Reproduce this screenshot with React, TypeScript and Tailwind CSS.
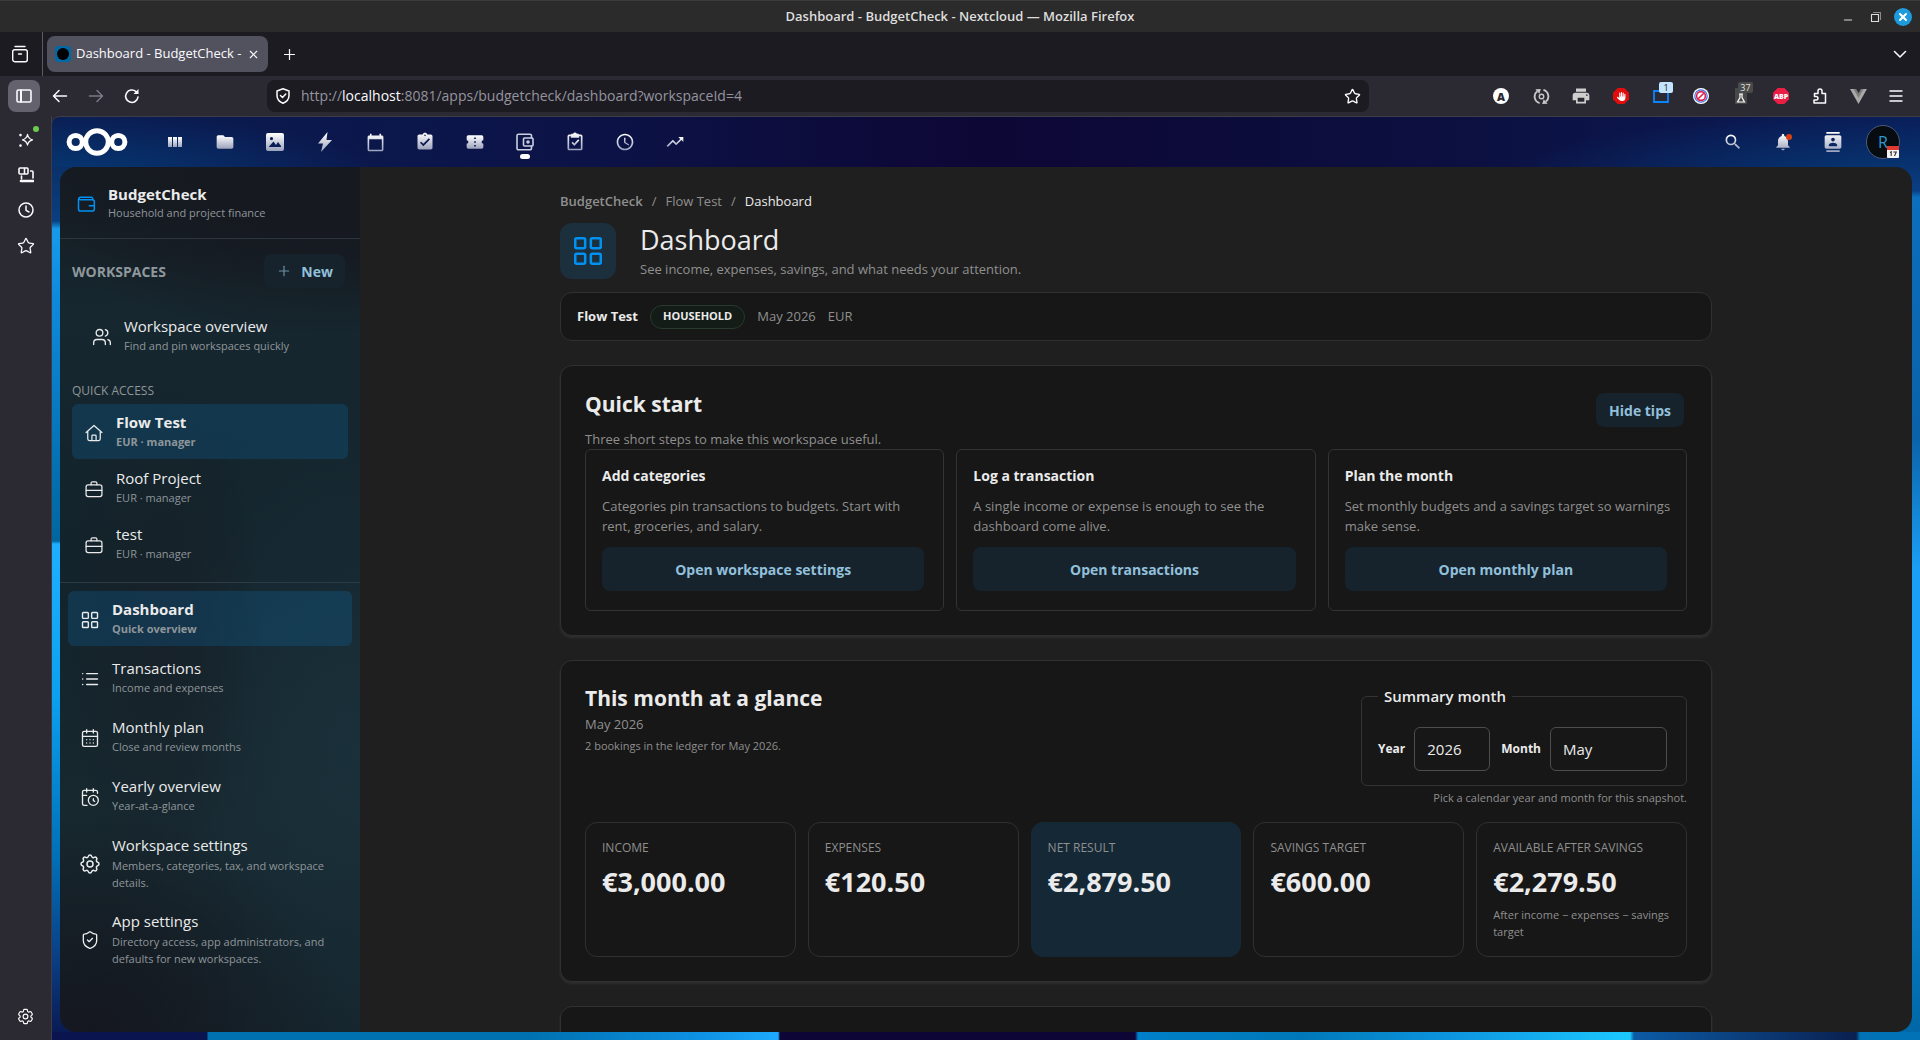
import React from "react";
import {
  MdFolder,
  MdCalendarToday,
  MdAssignmentTurnedIn,
  MdConfirmationNumber,
  MdAccessTime,
  MdTrendingUp,
  MdSearch,
  MdNotifications,
  MdContacts,
  MdPrint,
} from "react-icons/md";
import { TbSettings } from "react-icons/tb";
import { HiOutlineCog6Tooth } from "react-icons/hi2";
import { FaHand } from "react-icons/fa6";
import {
  LayoutGrid,
  CalendarDays,
  CalendarClock,
  ShieldCheck,
  Users,
  Star,
  Plus,
  X,
} from "lucide-react";

type Kids = { children: React.ReactNode };

function Line({ children, size = 20, sw = 1.5, box = 24, className = "" }: Kids & { size?: number; sw?: number; box?: number; className?: string }) {
  return (
    <svg width={size} height={size} viewBox={`0 0 ${box} ${box}`} fill="none" stroke="currentColor" strokeWidth={sw} strokeLinecap="round" strokeLinejoin="round" className={className} aria-hidden="true">
      {children}
    </svg>
  );
}

/* ---------- Window chrome ---------- */

function TitleBar() {
  return (
    <div className="relative flex h-8 shrink-0 items-center justify-end border-t border-[#3c3c3c] bg-[#2b2b2b] pr-2">
      <span className="absolute inset-x-0 text-center text-[13px] font-semibold text-[#dedede]">Dashboard - BudgetCheck - Nextcloud — Mozilla Firefox</span>
      <div className="relative flex items-center text-[#dedede]">
        <button aria-label="Minimize" className="flex h-6 w-7 items-center justify-center">
          <Line size={12} box={12} sw={1.2}><path d="M2.500 9h7" /></Line>
        </button>
        <button aria-label="Restore" className="flex h-6 w-7 items-center justify-center">
          <Line size={12} box={12} sw={1.1}><path d="M1.500 3.500h7v7h-7z" /><path d="M3.500 1.500h7v7" stroke="#8a8a8a" /></Line>
        </button>
        <button aria-label="Close" className="ml-1 flex size-[18px] items-center justify-center rounded-full bg-[#1d9bdc] text-white">
          <X size={12} strokeWidth={4} />
        </button>
      </div>
    </div>
  );
}

function TabBar() {
  return (
    <div className="flex h-11 shrink-0 items-center bg-[#1c1b22] text-[#fbfbfe]">
      <div className="flex h-full w-[43px] items-center justify-center border-r border-[#5b5b66] pr-[2px]">
        <button aria-label="Recent browsing">
          <Line size={18} box={18} sw={1.4}><path d="M4 1.500h10" /><rect x="1.700" y="4.700" width="14.600" height="12" rx="2" /><path d="M7.500 9h3" /></Line>
        </button>
      </div>
      <div className="ml-1 flex h-9 w-[221px] items-center rounded-lg bg-[#52525e] pl-2 pr-2">
        <span className="flex size-4 shrink-0 items-center justify-center rounded-[3px] bg-[#0068a3]"><span className="size-3 rounded-full bg-black" /></span>
        <span className="ml-[5px] flex-1 whitespace-nowrap text-[13px]">Dashboard - BudgetCheck -</span>
        <button aria-label="Close tab"><X size={13} strokeWidth={2} /></button>
      </div>
      <button aria-label="New tab" className="ml-[13px]"><Plus size={17} strokeWidth={1.7} /></button>
      <button aria-label="List all tabs" className="ml-auto mr-3">
        <Line size={16} box={16}><path d="M2.500 5.500 8 11l5.500-5.500" /></Line>
      </button>
    </div>
  );
}

function Octagon({ color, children }: Kids & { color: string }) {
  return (
    <span className="relative flex size-4 items-center justify-center text-white">
      <svg viewBox="0 0 16 16" width="16" height="16" className="absolute inset-0" aria-hidden="true"><path d="M4.700 0h6.600L16 4.700v6.600L11.300 16H4.700L0 11.300V4.700z" fill={color} /></svg>
      <span className="relative flex items-center justify-center">{children}</span>
    </span>
  );
}

const EXT: { name: string; icon: React.ReactNode; narrow?: boolean }[] = [
  { name: "Account", icon: <span className="flex size-4 items-center justify-center rounded-full bg-white text-[11px] font-extrabold leading-none text-[#2b2a33]">A</span> },
  {
    name: "Sync",
    icon: (
      <Line size={17} box={18} sw={2} className="text-[#c6c6c6]">
        <path d="M7 16A7.200 7.200 0 0 1 4.500 3.400M11 2A7.200 7.200 0 0 1 13.500 14.600" strokeLinecap="butt" />
        <path d="M2.500 1.300 8.300 1 6.700 6zM15.500 16.700l-5.800.3 1.600-5z" fill="currentColor" stroke="none" />
        <circle cx="9" cy="9" r="2.400" strokeWidth="1.400" />
      </Line>
    ),
  },
  { name: "Print", icon: <MdPrint size={20} className="text-[#cfcfcf]" /> },
  { name: "Blocker", icon: <Octagon color="#e00d0d"><FaHand size={9} /></Octagon> },
  {
    name: "Containers",
    icon: (
      <span className="relative">
        <svg width="16" height="14" viewBox="0 0 16 14" aria-hidden="true"><path d="M1 2h14v11H1z" fill="none" stroke="#0a84ff" strokeWidth="1.800" /></svg>
        <span className="absolute -top-[7px] left-[6px] h-[11px] w-[14px] rounded-[2px] bg-[#c3e5ff] text-center text-[9px] leading-[11px] text-[#15141a]">1</span>
      </span>
    ),
  },
  {
    name: "Privacy",
    icon: (
      <svg width="16" height="16" viewBox="0 0 16 16" fill="none" aria-hidden="true"><circle cx="8" cy="8" r="8" fill="#fff" /><circle cx="8" cy="8" r="6.200" stroke="#3f6fe0" strokeWidth="1.200" /><circle cx="8" cy="8" r="4.400" stroke="#d5214f" strokeWidth="1.600" /><path d="m5.200 10.800 5.600-5.600" stroke="#d5214f" strokeWidth="1.600" /></svg>
    ),
  },
  {
    name: "Lab",
    icon: (
      <span className="relative">
        <svg width="12" height="16" viewBox="0 0 12 16" aria-hidden="true"><rect width="12" height="16" rx="1" fill="#484848" /><path d="M4 6h4M5 6.500v3L2.500 14h7L7 9.500v-3" fill="none" stroke="#fff" strokeWidth="1.200" /></svg>
        <span className="absolute -top-[6px] left-[3px] h-[11px] w-[15px] rounded-[2px] bg-[#4a4a4a] text-center text-[9px] leading-[11px] text-[#e0e0e0]">37</span>
      </span>
    ),
  },
  { name: "Adblock Plus", icon: <Octagon color="#ed1e45"><span className="text-[7px] font-extrabold leading-none">ABP</span></Octagon> },
  { name: "Extensions", narrow: true, icon: <Line size={16} box={16} sw={1.5}><path d="M2 15h11.500V5.500H10V3a2 2 0 0 0-4 0v2.500H2.500v3h1.700a1.700 1.700 0 0 1 0 3.500H2z" /></Line> },
  { name: "Vue devtools", narrow: true, icon: <svg width="17" height="15" viewBox="0 0 18 16" aria-hidden="true"><path d="M0 0h18L9 16z" fill="#a9a9a9" /><path d="M3.600 0h10.800L9 9.500z" fill="#7d7d7d" /><path d="M6.500 0h5L9 4.500z" fill="#2b2a33" /></svg> },
  { name: "Menu", narrow: true, icon: <Line size={16} box={16} sw={1.4}><path d="M2 3h12M2 8h12M2 13h12" /></Line> },
];

function Toolbar() {
  return (
    <div className="flex h-10 shrink-0 items-center bg-[#2b2a33] pl-2 pr-[5px] text-[#fbfbfe]">
      <button aria-label="Sidebars" className="flex size-8 items-center justify-center rounded-lg bg-[#63626d]">
        <Line size={16} box={16} sw={1.6}><rect x="1" y="2" width="14" height="12" rx="1.500" /><path d="M5 2.500v11" strokeWidth="2" /></Line>
      </button>
      <button aria-label="Back" className="ml-3"><Line size={16} box={16}><path d="M14.500 8h-13M7 2.500 1.500 8 7 13.500" /></Line></button>
      <button aria-label="Forward" className="ml-5 text-[#7a7984]"><Line size={16} box={16}><path d="M1.500 8h13M9 2.500 14.500 8 9 13.500" /></Line></button>
      <button aria-label="Reload" className="ml-5"><Line size={16} box={16} sw={1.6}><path d="M14 9a6.200 6.200 0 1 1-2-5.400L13.500 5" /><path d="M14.500 1v5h-5z" fill="currentColor" stroke="none" /></Line></button>
      <div className="ml-[127px] flex h-8 max-w-[1102px] flex-1 items-center rounded-lg bg-[#1c1b22] pl-2 pr-2">
        <Line size={16} box={16}><path d="M8 .8 14 3v4.500c0 3.500-2.500 6.300-6 7.700-3.500-1.400-6-4.200-6-7.700V3z" /><path d="m5.500 7.500 2 2 3.300-3.500" /></Line>
        <div role="textbox" aria-label="Address" className="ml-[10px] flex-1 text-sm text-[#95949e]">
          http://<span className="text-[#fbfbfe]">localhost</span>:8081/apps/budgetcheck/dashboard?workspaceId=4
        </div>
        <button aria-label="Bookmark"><Star size={17} strokeWidth={1.9} /></button>
      </div>
      <div className="ml-auto flex items-center">
        {EXT.map((e) => (
          <button key={e.name} aria-label={e.name} className={`flex h-8 items-center justify-center ${e.narrow ? "w-[38px]" : "w-10"}`}>{e.icon}</button>
        ))}
      </div>
    </div>
  );
}

function BrowserSidebar() {
  return (
    <aside className="flex w-[52px] shrink-0 flex-col items-center border-r border-[#3e3d47] bg-[#2b2a33] pb-[14px] pt-4 text-[#fbfbfe]">
      <button aria-label="AI chatbot" className="relative">
        <Line size={16} box={16} sw={1.3}><path d="M9.500 2.500c.6 3.200 1.800 4.500 5 5.300-3.200.8-4.400 2-5 5.200-.6-3.200-1.800-4.400-5-5.200 3.200-.8 4.400-2.100 5-5.300z" /><path d="M2.500 3v.1M2.500 13.500v.1" strokeWidth="2.600" /></Line>
        <span className="absolute -right-[5px] -top-[6px] size-[6px] rounded-full bg-[#6ccb4e]" />
      </button>
      <button aria-label="Synced tabs" className="mt-[19px]">
        <Line size={16} box={16} sw={1.6}><rect x="1" y="1" width="9" height="6" rx="1" /><path d="M6.500 1.500v5M3.500 9v3M12.500 4H14a1 1 0 0 1 1 1v6" /><path d="M3 14h12" strokeWidth="2.600" /></Line>
      </button>
      <button aria-label="History" className="mt-[19px]"><Line size={16} box={16}><circle cx="8" cy="8" r="7" /><path d="M8 4v4.300l3 1.700" /></Line></button>
      <button aria-label="Bookmarks" className="mt-[19px]"><Star size={18} strokeWidth={1.7} /></button>
      <button aria-label="Customize sidebar" className="mt-auto"><HiOutlineCog6Tooth size={19} strokeWidth={1.5} /></button>
    </aside>
  );
}

/* ---------- Nextcloud header ---------- */

const G = "fill-[url(#iconFade)]";

const APPS: { name: string; icon: React.ReactNode; active?: boolean }[] = [
  { name: "Dashboard", icon: <svg width="14" height="10" viewBox="0 0 14 10" className={G}><path d="M0 0h4v10H0zM5 0h4v10H5zM10 0h4v10h-4z" /></svg> },
  { name: "Files", icon: <MdFolder size={20} className={G} /> },
  { name: "Photos", icon: <svg width="18" height="18" viewBox="0 0 18 18" className={G}><path fillRule="evenodd" d="M2 0h14a2 2 0 0 1 2 2v14a2 2 0 0 1-2 2H2a2 2 0 0 1-2-2V2a2 2 0 0 1 2-2zM5.500 4a1.600 1.600 0 1 0 0 3.200 1.600 1.600 0 0 0 0-3.200zM3 14h12v-1l-3-4-2 3-2.500-3.500L3 13.500z" /></svg> },
  { name: "Activity", icon: <svg width="16" height="20" viewBox="0 0 16 20" className={G}><path d="M10.500 0 1 11.500h5L4 20 15 8H9.500z" /></svg> },
  { name: "Calendar", icon: <MdCalendarToday size={19} className={G} /> },
  { name: "Tasks", icon: <MdAssignmentTurnedIn size={20} className={G} /> },
  { name: "Tickets", icon: <MdConfirmationNumber size={20} className={G} /> },
  {
    name: "BudgetCheck",
    active: true,
    icon: (
      <Line size={18} box={18} sw={1.6} className="text-[#c9cfe0]">
        <path d="M15.500 5V2.700A1.500 1.500 0 0 0 14 1.200H2.500A1.500 1.500 0 0 0 1 2.700v12.600a1.500 1.500 0 0 0 1.500 1.500H14a1.500 1.500 0 0 0 1.500-1.500V13" />
        <rect x="7.500" y="5" width="9.500" height="8" rx="1" /><circle cx="12" cy="9" r="1" />
      </Line>
    ),
  },
  {
    name: "Checks",
    icon: (
      <svg width="20" height="20" viewBox="0 0 24 24" aria-hidden="true"><path className={G} d="M19 3h-2.500V2h-2.300a2.400 2.400 0 0 0-4.400 0H7.500v1H5a2 2 0 0 0-2 2v15a2 2 0 0 0 2 2h14a2 2 0 0 0 2-2V5a2 2 0 0 0-2-2zm0 17H5V5h2v2h10V5h2z" /><path className={G} d="m7.800 13.200 1.400-1.400 2 2 4.600-5 1.400 1.400-6 6.500z" /></svg>
    ),
  },
  { name: "Time", icon: <MdAccessTime size={20} className={G} /> },
  { name: "Analytics", icon: <MdTrendingUp size={20} className={G} /> },
];

function CloudHeader() {
  return (
    <header className="flex h-[50px] shrink-0 items-center pl-[14px] pr-5">
      <svg width="0" height="0" className="absolute" aria-hidden="true">
        <linearGradient id="iconFade" x1="0" y1="0" x2="0" y2="1"><stop offset="0" stopColor="#fff" /><stop offset="1" stopColor="#9ba3bd" /></linearGradient>
      </svg>
      <a href="#home" aria-label="Nextcloud">
        <svg width="62" height="28" viewBox="0 0 62 28" fill="none" stroke="#fff" strokeWidth="5" aria-hidden="true">
          <circle cx="31" cy="14" r="11.300" /><circle cx="9.700" cy="14" r="6.600" /><circle cx="52.300" cy="14" r="6.600" />
        </svg>
      </a>
      <nav className="ml-[22px] flex h-full">
        {APPS.map((a) => (
          <a key={a.name} href="#app" aria-label={a.name} className="relative flex w-[50px] items-center justify-center">
            {a.icon}
            {a.active && <span className="absolute bottom-[8px] h-[5px] w-[10px] rounded-full bg-white" />}
          </a>
        ))}
      </nav>
      <div className="ml-auto flex items-center">
        <button aria-label="Search" className="flex w-[50px] justify-center"><MdSearch size={20} className={G} /></button>
        <button aria-label="Notifications" className="relative flex w-[50px] justify-center">
          <MdNotifications size={20} className={G} />
          <span className="absolute right-[16px] top-[2px] size-[6px] rounded-full bg-[#d9400f]" />
        </button>
        <button aria-label="Contacts" className="flex w-[50px] justify-center"><MdContacts size={20} className={G} /></button>
        <button aria-label="Account menu" className="relative ml-2 flex size-[34px] items-center justify-center rounded-full border border-[#4a5a7a] bg-[#060c10] text-base text-[#2f9ad0]">
          R
          <svg width="12" height="12" viewBox="0 0 12 12" className="absolute bottom-0 right-0" aria-hidden="true"><rect width="12" height="12" rx="1" fill="#f4f4f4" /><path d="M0 0h12v4H0z" fill="#e0392e" /><path d="M3 6.500 4.200 5.800V10M6.300 6h3L7.500 10" stroke="#333" strokeWidth="1.100" fill="none" /></svg>
        </button>
      </div>
    </header>
  );
}

/* ---------- App navigation ---------- */

const Briefcase = () => (
  <Line size={20}><rect x="2.500" y="7" width="19" height="14" rx="2.500" /><path d="M8.500 7V5a1.700 1.700 0 0 1 1.700-1.700h3.600A1.700 1.700 0 0 1 15.500 5v2M2.500 13.500h19" /></Line>
);
const House = () => (
  <Line size={20}><path d="M2.500 11.500 12 3l9.500 8.500M4.500 9.800V19a2 2 0 0 0 2 2h11a2 2 0 0 0 2-2V9.800M9.500 21v-5.500a1 1 0 0 1 1-1h3a1 1 0 0 1 1 1V21" /></Line>
);
const ListIcon = () => (
  <Line size={20} sw={1.7}><path d="M8 5.500h13M8 12h13M8 18.500h13M3.200 5.500h.1M3.200 12h.1M3.200 18.500h.1" /></Line>
);

function NavItem({ icon, title, sub, active, tight, className = "" }: { icon: React.ReactNode; title: string; sub: string; active?: boolean; tight?: boolean; className?: string }) {
  return (
    <a href="#nav" className={`flex items-center rounded-md px-3 py-2 text-[#ebebeb] ${active ? "bg-[#0e75b83b] font-bold" : ""} ${className}`}>
      <span className="mt-[2px] shrink-0">{icon}</span>
      <span className="ml-3 min-w-0 flex-1">
        <span className="block text-[15px] leading-5">{title}</span>
        <span className={`block text-[11px] text-[#8f969a] ${tight ? "pt-[2px] leading-[17px]" : "pt-px leading-[18px]"}`}>{sub}</span>
      </span>
    </a>
  );
}

function AppNav() {
  return (
    <nav className="flex w-[300px] shrink-0 flex-col bg-[radial-gradient(260px_220px_at_10%_100%,#15171f,transparent),radial-gradient(340px_170px_at_90%_0%,#161920_40%,transparent),radial-gradient(100px_260px_at_35%_54%,#172129,transparent),radial-gradient(260px_360px_at_100%_68%,#1a303a,transparent),linear-gradient(180deg,#161b22_0%,#16272f_16%,#13232b_45%,#17282f_75%,#14232b_100%)]">
      <div className="flex items-center border-b border-[#2d363c] pb-[17px] pl-4 pt-[17px]">
        <Line size={20} sw={1.8} className="mt-[3px] text-[#0091f2]"><path d="M20 7V5.500A1.500 1.500 0 0 0 18.500 4H5a2.500 2.500 0 0 0-2 2.500V18a2.500 2.500 0 0 0 2.500 2.500h14A2.500 2.500 0 0 0 22 18V9.500A2.500 2.500 0 0 0 19.500 7H5.500A2 2 0 0 1 3.500 5.500M22 14h-6" /></Line>
        <div className="ml-3">
          <div className="text-[15px] font-bold leading-5 text-[#ebebeb]">BudgetCheck</div>
          <div className="pt-px text-[11px] leading-4 text-[#8f969a]">Household and project finance</div>
        </div>
      </div>
      <div className="mt-[15px] flex h-[34px] items-center pl-3 pr-[15px]">
        <h2 className="text-[14px] font-bold text-[#8f989c]">WORKSPACES</h2>
        <button className="ml-auto flex h-[34px] items-center rounded-lg bg-[#16232c] pl-3 pr-3 text-[14px] font-bold text-[#92c0dc]">
          <Plus size={16} strokeWidth={1.7} className="mr-[9px] opacity-70" />New
        </button>
      </div>
      <NavItem className="ml-5 mr-3 mt-5" icon={<Users size={20} strokeWidth={1.6} />} title="Workspace overview" sub="Find and pin workspaces quickly" />
      <h3 className="mb-[5px] ml-3 mt-5 text-[12px] leading-4 text-[#8f969a]">QUICK ACCESS</h3>
      <div className="mx-3 flex flex-col gap-px">
        <NavItem active icon={<House />} title="Flow Test" sub="EUR · manager" />
        <NavItem icon={<Briefcase />} title="Roof Project" sub="EUR · manager" />
        <NavItem icon={<Briefcase />} title="test" sub="EUR · manager" />
      </div>
      <div className="mt-[11px] flex flex-col gap-1 border-t border-[#2d3c44] px-2 pt-2">
        <NavItem active icon={<LayoutGrid size={20} strokeWidth={1.7} />} title="Dashboard" sub="Quick overview" />
        <NavItem icon={<ListIcon />} title="Transactions" sub="Income and expenses" />
        <NavItem icon={<CalendarDays size={20} strokeWidth={1.6} />} title="Monthly plan" sub="Close and review months" />
        <NavItem icon={<CalendarClock size={20} strokeWidth={1.6} />} title="Yearly overview" sub="Year-at-a-glance" />
        <NavItem tight icon={<TbSettings size={24} strokeWidth={1.5} className="-mx-[2px]" />} title="Workspace settings" sub="Members, categories, tax, and workspace details." />
        <NavItem tight icon={<ShieldCheck size={20} strokeWidth={1.6} />} title="App settings" sub="Directory access, app administrators, and defaults for new workspaces." />
      </div>
    </nav>
  );
}

/* ---------- Dashboard ---------- */

const STEPS = [
  { title: "Add categories", text: "Categories pin transactions to budgets. Start with rent, groceries, and salary.", cta: "Open workspace settings" },
  { title: "Log a transaction", text: "A single income or expense is enough to see the dashboard come alive.", cta: "Open transactions" },
  { title: "Plan the month", text: "Set monthly budgets and a savings target so warnings make sense.", cta: "Open monthly plan" },
];

const METRICS = [
  { label: "INCOME", value: "€3,000.00" },
  { label: "EXPENSES", value: "€120.50" },
  { label: "NET RESULT", value: "€2,879.50", accent: true },
  { label: "SAVINGS TARGET", value: "€600.00" },
  { label: "AVAILABLE AFTER SAVINGS", value: "€2,279.50", note: "After income − expenses − savings target" },
];

const CARD = "mt-6 rounded-xl border border-[#303030] bg-[#171717] p-6 shadow-[0_2px_3px_#4d4d4d59]";
const BTN = "rounded-lg bg-[#16232c] text-[14px] font-bold text-[#92c0dc]";

function QuickStart() {
  return (
    <section className={CARD}>
      <div className="flex items-start justify-between">
        <div>
          <h2 className="text-[21px] font-bold leading-7">Quick start</h2>
          <p className="mt-[11px] text-[13px] leading-5 text-[#8f8f8f]">Three short steps to make this workspace useful.</p>
        </div>
        <button className={`${BTN} mr-[3px] mt-[3px] h-[34px] min-w-[88px] px-3`}>Hide tips</button>
      </div>
      <div className="grid grid-cols-3 gap-3">
        {STEPS.map((s) => (
          <article key={s.title} className="rounded-md border border-[#333] pb-[19px] pl-4 pr-3 pt-4">
            <h3 className="text-[14px] font-bold leading-5">{s.title}</h3>
            <p className="mt-[10px] text-[13px] leading-5 text-[#8f8f8f]">{s.text}</p>
            <div className="mt-[11px] flex pr-[7px]"><button className={`${BTN} h-11 flex-1`}>{s.cta}</button></div>
          </article>
        ))}
      </div>
    </section>
  );
}

function MonthGlance() {
  const field = "h-11 appearance-none rounded-md border border-[#4d4d4d] bg-[#171717] px-3 text-[15px] text-[#ebebeb]";
  return (
    <section className={CARD}>
      <div className="flex items-start justify-between">
        <div>
          <h2 className="text-[21px] font-bold leading-[26px]">This month at a glance</h2>
          <p className="mt-[3px] text-[13px] leading-5 text-[#8f8f8f]">May 2026</p>
          <p className="mt-[3px] text-[11px] leading-[18px] text-[#8f8f8f]">2 bookings in the ledger for May 2026.</p>
        </div>
        <div>
          <fieldset className="rounded-md border border-[#333] pb-[14px] pl-4 pr-[19px]">
            <legend className="px-[6px] text-[15px] font-semibold leading-[22px]">Summary month</legend>
            <div className="flex items-center pt-5">
              <label htmlFor="year" className="text-[12px] font-bold">Year</label>
              <input id="year" type="text" defaultValue="2026" className={`${field} ml-[9px] w-[76px]`} />
              <label htmlFor="month" className="ml-[11px] text-[12px] font-bold">Month</label>
              <select id="month" defaultValue="May" className={`${field} ml-[9px] w-[117px]`}><option>May</option></select>
            </div>
          </fieldset>
          <p className="mt-[4px] text-right text-[11px] leading-4 text-[#8f8f8f]">Pick a calendar year and month for this snapshot.</p>
        </div>
      </div>
      <div className="mt-4 grid grid-cols-5 gap-3">
        {METRICS.map((m) => (
          <div key={m.label} className={`rounded-xl border px-4 pb-4 pt-4 ${m.accent ? "border-[#152836] bg-[#152836]" : "border-[#303030]"}`}>
            <div className="whitespace-nowrap text-[12px] leading-[17px] text-[#8f8f8f]">{m.label}</div>
            <div className="mt-[10px] text-[27px] font-bold leading-8">{m.value}</div>
            {m.note && <div className="mt-2 text-[11px] leading-[17px] text-[#8f8f8f]">{m.note}</div>}
          </div>
        ))}
      </div>
    </section>
  );
}

function Main() {
  return (
    <main className="min-w-0 flex-1 overflow-hidden bg-[#1f1f1f] text-[#ebebeb]">
      <div className="mx-auto max-w-[1152px] pt-6">
        <nav aria-label="Breadcrumb" className="flex gap-[9px] text-[13px] leading-5 text-[#8f8f8f]">
          <a href="#app" className="font-semibold">BudgetCheck</a><span>/</span><a href="#ws">Flow Test</a><span>/</span><span className="font-medium text-[#ebebeb]">Dashboard</span>
        </nav>
        <div className="mt-3 flex gap-6">
          <span className="flex size-14 items-center justify-center rounded-xl bg-[#1c2f3d] text-[#0091f2]"><LayoutGrid size={34} strokeWidth={1.8} /></span>
          <div>
            <h1 className="text-[27px] leading-[34px]">Dashboard</h1>
            <p className="mt-[2px] text-[13px] leading-5 text-[#8f8f8f]">See income, expenses, savings, and what needs your attention.</p>
          </div>
        </div>
        <div className="mt-[13px] flex h-[49px] items-center rounded-xl border border-[#303030] bg-[#171717] px-4 text-[13px] text-[#8f8f8f]">
          <strong className="text-[#ebebeb]">Flow Test</strong>
          <span className="ml-3 flex h-6 items-center rounded-full border border-[#263a2e] bg-[#141c18] px-3 text-[11px] font-bold text-[#ebebeb]">HOUSEHOLD</span>
          <span className="ml-3">May 2026</span>
          <span className="ml-3">EUR</span>
        </div>
        <QuickStart />
        <MonthGlance />
        <section className={`${CARD} h-40`} />
      </div>
    </main>
  );
}

export default function App() {
  return (
    <div className="flex h-screen flex-col overflow-hidden bg-[#2b2a33] font-['Open_Sans','Noto_Sans',sans-serif]">
      <TitleBar />
      <TabBar />
      <Toolbar />
      <div className="flex min-h-0 flex-1">
        <BrowserSidebar />
        <div className="flex min-w-0 flex-1 flex-col rounded-tl-lg border-t border-[#3e3d47] bg-[linear-gradient(90deg,#0a1550_0,#0a1550_155px,#0071b0_156px,#0071b0_480px,#0d8fe0_640px,#1eaaff_726px,#0d0535_728px,#0d0535_1083px,#0080c8_1086px,#0078b8_1250px,#0d95df_1400px,#1cc8ff_1578px,#0c5ba5_1582px,#0a2050_1804px,#0072b5_1808px),linear-gradient(180deg,#0a3068_0,#0a3f80_54px,#169bec_62px,#0e8add_130px,#0066a0_374px,#1eb0ff_377px,#0ba0f0_530px,#0070b8_690px,#0a3f85_790px,#0a1850_870px),linear-gradient(180deg,#08336f_0,#0a3f85_24px,#0b6fbe_30px,#0a62a8_270px,#1b9ef5_400px,#1b9ef5_535px,#0068a8_860px),radial-gradient(340px_70px_at_0_64px,#063a76,transparent),radial-gradient(420px_70px_at_100%_64px,#063a76,transparent),linear-gradient(90deg,#0a1d52,#0c1246_30%,#0d0735_50%,#0c1040_75%,#0a1c58)] bg-no-repeat [background-position:0_100%,0_50px,100%_50px,0_0,0_0,0_0] [background-size:100%_8px,30px_100%,30px_100%,100%_50px,100%_50px,100%_60px] pb-2">
          <CloudHeader />
          <div className="mx-2 flex min-h-0 flex-1 overflow-hidden rounded-2xl">
            <AppNav />
            <Main />
          </div>
        </div>
      </div>
    </div>
  );
}
